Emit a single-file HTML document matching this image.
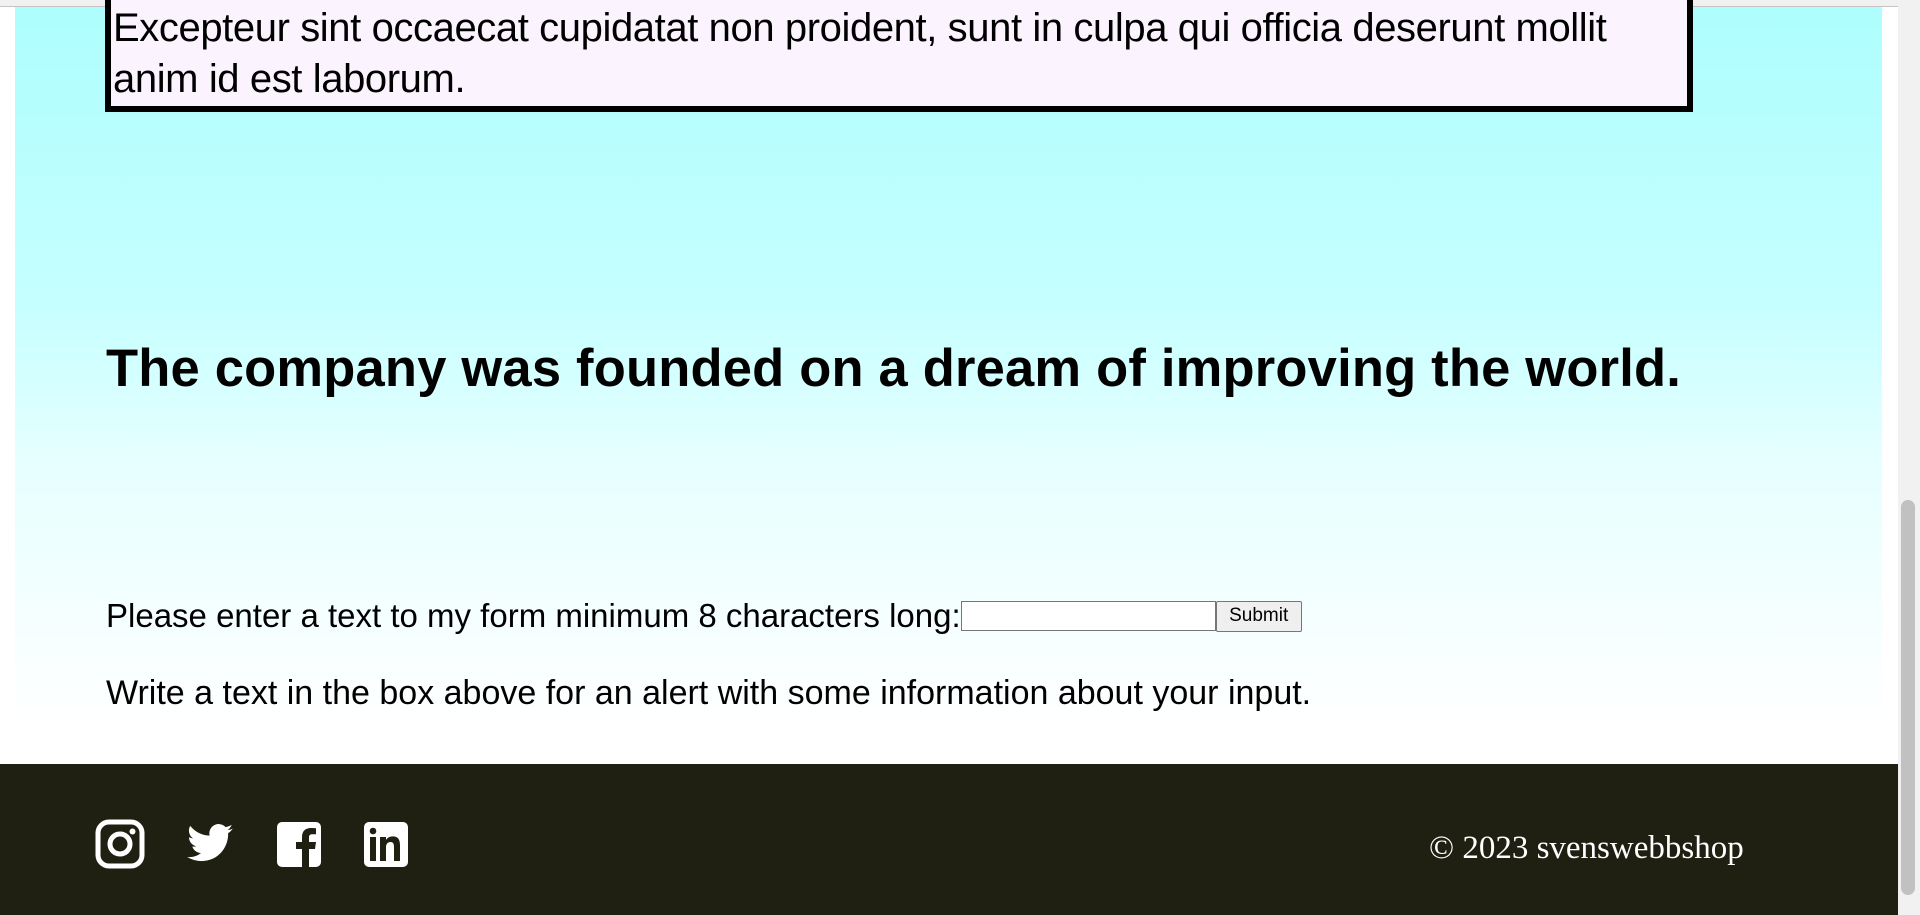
<!DOCTYPE html>
<html><head><meta charset="utf-8"><style>
html,body{margin:0;padding:0;width:1920px;height:915px;overflow:hidden;background:#fff;font-family:"Liberation Sans",sans-serif}
.main{position:absolute;left:15px;top:0;width:1867px;height:764px;background:linear-gradient(#adfefe 0%,#c6ffff 40%,#e6ffff 60%,#fff 95%)}
.topbar{position:absolute;left:0;top:0;width:1920px;height:6px;background:#f1f1f1;border-bottom:1px solid #c4c4c4}
.box{position:absolute;left:105px;top:-10px;width:1588px;height:122px;background:#fbf4ff;border:6px solid #000;font-size:40px;line-height:51px;color:#000;padding-left:2px;box-sizing:border-box;padding-top:7px;letter-spacing:-0.4px}
h2{position:absolute;left:106px;top:338px;margin:0;font-size:52.5px;font-weight:bold;letter-spacing:0.2px}
.form{position:absolute;left:106px;top:597px;font-size:33px;display:flex;align-items:center}
.form input{width:255px;height:30px;box-sizing:border-box;border:1px solid #767676;margin:0;padding:0}
.form button{height:31px;width:86px;font-size:19px;background:#efefef;border:1px solid #767676;border-radius:2px;padding:0;font-family:"Liberation Sans",sans-serif}
.p2{position:absolute;left:106px;top:674px;font-size:34px}
.scroll{position:absolute;left:1898px;top:6px;width:22px;height:909px;background:#f1f1f1}
.thumb{position:absolute;left:1901px;top:500px;width:14px;height:395px;background:#c1c1c1;border-radius:7px}
footer{position:absolute;left:0;top:764px;width:1898px;height:151px;background:#1f2012}
.icons{position:absolute;top:55px;left:95px;display:flex;gap:39px}
.copy{position:absolute;left:1429px;top:66px;color:#fff;font-family:"Liberation Serif",serif;font-size:33px}
</style></head><body>
<div class="main"></div>
<div class="topbar"></div>
<div class="box">Excepteur sint occaecat cupidatat non proident, sunt in culpa qui officia deserunt mollit<br>anim id est laborum.</div>
<h2>The company was founded on a dream of improving the world.</h2>
<div class="form">Please enter a text to my form minimum 8 characters long:<input type="text"><button>Submit</button></div>
<div class="p2">Write a text in the box above for an alert with some information about your input.</div>
<div class="scroll"></div><div class="thumb"></div>
<footer>
<div class="icons">
<svg width="50" height="50" viewBox="0 0 50 50"><rect x="3" y="3" width="44" height="44" rx="11" fill="none" stroke="#fff" stroke-width="5"/><circle cx="25" cy="25" r="10" fill="none" stroke="#fff" stroke-width="5"/><circle cx="37.5" cy="12.5" r="3" fill="#fff"/></svg>
<svg width="52" height="50" viewBox="0 0 24 24"><path fill="#fff" d="M23 4.6c-.8.4-1.7.6-2.6.7.9-.6 1.6-1.4 2-2.5-.9.5-1.900.9-2.900 1.1A4.5 4.5 0 0 0 11.8 8 12.8 12.8 0 0 1 2.5 3.3a4.5 4.5 0 0 0 1.4 6c-.7 0-1.4-.2-2-.6 0 2.2 1.6 4 3.6 4.4-.7.2-1.4.2-2 .1.6 1.8 2.2 3.1 4.2 3.1A9 9 0 0 1 1 18.2 12.8 12.8 0 0 0 7.9 20.2c8.3 0 12.8-6.9 12.8-12.8v-.6c.9-.6 1.6-1.4 2.3-2.2z"/></svg>
<svg width="48" height="50" viewBox="0 0 48 50"><rect x="2" y="3" width="44" height="45" rx="5" fill="#fff"/><path fill="#1f2012" d="M27 48V30h-6v-7h6v-5c0-6 3.5-9 9-9 2.5 0 4.5.2 5 .3v6h-3.5c-2.8 0-3.5 1.3-3.5 3.3V23h7l-1 7h-6v18z"/></svg>
<svg width="48" height="50" viewBox="0 0 48 50"><rect x="2" y="3" width="44" height="45" rx="5" fill="#fff"/><circle cx="11" cy="12" r="3.3" fill="#1f2012"/><rect x="8" y="18" width="6" height="24" fill="#1f2012"/><path fill="#1f2012" d="M18 18h6v3c1.2-2 3.5-3.6 6.8-3.6 5.5 0 7.2 3.4 7.2 9V42h-6V28c0-3-.8-5-3.5-5s-4.5 2-4.5 5v14h-6z"/></svg>
</div>
<div class="copy">© 2023 svenswebbshop</div>
</footer>
</body></html>
